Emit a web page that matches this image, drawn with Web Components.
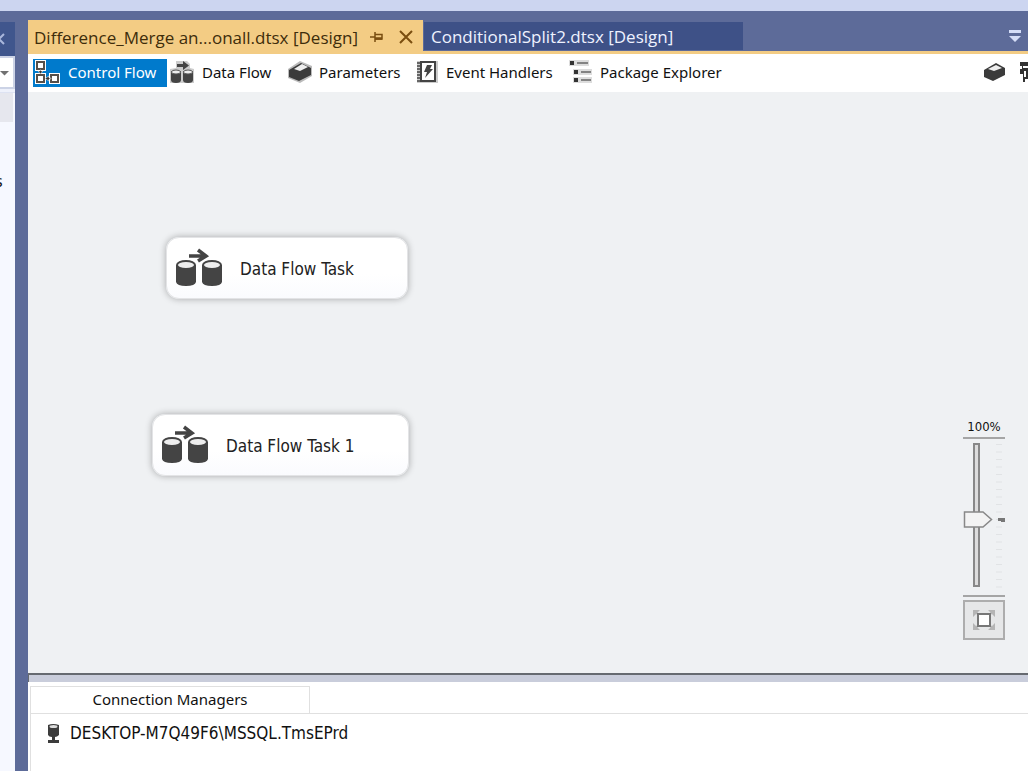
<!DOCTYPE html>
<html lang="en">
<head>
<meta charset="utf-8">
<title>Package designer</title>
<style>
html, body { margin: 0; height: 100%; overflow: hidden; }
body { font-family: "Noto Sans", "Open Sans", sans-serif; background: #5d6b99; color: #111; }
</style>
</head>
<body>
<ide-shell>
  <side-panel slot="side"></side-panel>
  <document-tabs slot="main"></document-tabs>
  <designer-toolbar slot="main"></designer-toolbar>
  <design-canvas slot="main">
    <task-node style="--x:138px;--y:145px;--w:242px">Data Flow Task</task-node>
    <task-node style="--x:124px;--y:322px;--w:257px">Data Flow Task 1</task-node>
    <zoom-control slot="zoom"></zoom-control>
  </design-canvas>
  <connection-managers slot="main"></connection-managers>
</ide-shell>
<script>
const BASE = '<style>:host,*{box-sizing:border-box}button{font:inherit;color:inherit;background:none;border:0;padding:0;margin:0;text-align:left}svg{display:block;flex:none}</style>';
const define = (name, html) => {
  const t = document.createElement('template');
  t.innerHTML = BASE + html;
  customElements.define(name, class extends HTMLElement {
    constructor() {
      super();
      this.attachShadow({ mode: 'open' }).append(t.content.cloneNode(true));
    }
  });
};

define('ide-shell', `<style>
:host{display:flex;flex-direction:column;height:100vh;background:#5d6b99}
.strip{height:11px;background:#ccd5f0;flex:none}
.work{flex:1;display:flex;gap:13px;min-height:0}
.main{flex:1;min-width:0;display:flex;flex-direction:column;padding-top:9px}
</style><div class="strip"></div><div class="work"><slot name="side"></slot><main class="main"><slot name="main"></slot></main></div>`);

define('side-panel', `<style>
:host{display:flex;flex-direction:column;width:15px;flex:none;margin-top:11px;background:#f6f8ff;overflow:hidden}
.head{height:34px;background:#40568d;display:flex;align-items:center}
.combo{height:33px;background:#fff;border:2px solid #ccd3e6;border-left:0;display:flex;align-items:center}
.rule{height:4px;background:#eef1fb;border-bottom:1px solid #dde2f2}
.sel{height:29px;width:13px;background:#e6e7ee}
.item{margin:47px 0 0 -5px;font-size:16px;line-height:24px}
</style>
<div class="head"><button aria-label="Close"><svg width="5" height="12" viewBox="0 0 5 12"><path d="M4 1L-1 6L4 11" fill="none" stroke="#a9b7dc" stroke-width="2"/></svg></button></div>
<div class="combo"><button aria-label="Open list"><svg width="10" height="6"><path d="M0 1H9L4.500 5.500Z" fill="#717171"/></svg></button></div>
<div class="rule"></div><div class="sel"></div><div class="item">s</div>`);

define('document-tabs', `<style>
:host{display:flex;height:34px;flex:none;border-bottom:3px solid #f3cc84;font-family:"Open Sans",sans-serif;font-size:17px;line-height:24px}
.tab{display:flex;align-items:center;white-space:nowrap}
.active{width:395px;height:34px;background:#f3cc84;color:#3e2d0b;padding-left:6px;flex:none}
.title{width:336px;padding-top:2px}
.other{width:319px;height:28px;margin:2px 0 0 1px;background:#3e5187;color:#eef2ff;padding:2px 0 0 7px}
.pin{width:28px}
.more{margin:10px 6px 0 auto;align-self:flex-start}
</style>
<div class="tab active"><button class="title">Difference_Merge an...onall.dtsx [Design]</button>
<button class="pin" aria-label="Pin"><svg width="14" height="12" viewBox="0 0 14 12"><path d="M0 6H5M5 1V11M5 3.500H12V8H5" fill="none" stroke="#7a4e10" stroke-width="1.500"/><path d="M5 7.500H12" stroke="#7a4e10" stroke-width="2.500"/></svg></button>
<button aria-label="Close tab"><svg width="16" height="14" viewBox="0 0 16 14"><path d="M2 1L14 13M14 1L2 13" stroke="#7a4e10" stroke-width="2"/></svg></button></div>
<button class="tab other">ConditionalSplit2.dtsx [Design]</button>
<button class="more" aria-label="Open documents"><svg width="14" height="13"><path d="M1 0H13V3H1ZM1 6H13L7 12Z" fill="#d5def8"/></svg></button>`);

define('designer-toolbar', `<style>
:host{display:flex;height:38px;flex:none;background:#fff;align-items:center;padding-left:5px;overflow:hidden;font-size:15px;line-height:22px;color:#111}
button{display:flex;align-items:center;height:28px;flex:none;white-space:nowrap;gap:7px;padding-bottom:2px}
.on{background:#007acc;color:#fff;width:134px;padding-left:2px;gap:8px;margin-right:3px}
.b{width:118px}.c{width:128px}.d{width:153px}
.right{margin-left:auto;gap:13px;width:45px}
</style>
<button class="on"><svg width="25" height="25" viewBox="0 0 25 25"><g fill="#655d55" stroke="#fff" stroke-width="4"><rect x="2" y="2" width="7" height="7"/><rect x="2" y="15" width="7" height="7"/><rect x="16" y="15" width="7" height="7"/></g><g fill="#fff" stroke="#564f49" stroke-width="2"><rect x="2" y="2" width="7" height="7"/><rect x="2" y="15" width="7" height="7"/><rect x="16" y="15" width="7" height="7"/></g><path d="M5 10H6V11H8L5.500 14L3 11H5ZM16 18H14V16L10 18.500L14 21V19H16Z" fill="#333" stroke="#fff" stroke-width=".5"/></svg>Control Flow</button>
<button class="b"><svg width="25" height="25" viewBox="0 0 25 25"><path d="M6 1H17L20 4V8L24 9V23H0V9L6 8Z" fill="#ccc"/><g fill="#444"><path d="M1 11V20Q1 23 6 23T11 20V11ZM13 11V20Q13 23 18 23T23 20V11Z"/><path d="M7 4H13V1L19 5.500L13 10V7H7Z"/></g><g fill="#eee" stroke="#555"><ellipse cx="6" cy="12" rx="4.500" ry="2"/><ellipse cx="18" cy="12" rx="4.500" ry="2"/></g></svg>Data Flow</button>
<button class="c"><svg width="24" height="24" viewBox="0 0 24 24"><path d="M0 9L12 1L24 6V16L12 23L0 18Z" fill="#bbb"/><path d="M1 10L13 3L23 8V15L11 21L1 17Z" fill="#3b3b3b"/><path d="M6 9L14 4L20 7L12 11Z" fill="#eee"/></svg>Parameters</button>
<button class="d"><svg width="23" height="24" viewBox="0 0 23 24"><path d="M1 1H22V23H1Z" fill="#ccc"/><path d="M5 2H19V21H5Z" fill="#fff" stroke="#444" stroke-width="2"/><path d="M1 3H5M1 6H5M1 9H5M1 12H5M1 15H5M1 18H5M1 21H5" stroke="#444" stroke-width="1.500"/><path d="M11 5H16L14 9H17L9 18L11 12H8Z" fill="#444"/></svg>Event Handlers</button>
<button><svg width="24" height="24" viewBox="0 0 24 24"><path d="M0 0H20V6H0ZM4 9H23V15H4ZM4 17H23V23H4Z" fill="#ddd"/><path d="M1 1H5V5H1ZM5 10H9V14H5ZM5 18H9V22H5Z" fill="#333"/><path d="M8 3H19M12 12H22M12 20H22" stroke="#666" stroke-width="1.500"/></svg>Package Explorer</button>
<button class="right" aria-label="Parameters and toolbox"><svg width="23" height="20" viewBox="0 0 23 20"><path d="M1 8L13 1L22 6V13L10 19L1 15Z" fill="#3b3b3b"/><path d="M5 7L13 3L19 6L11 9Z" fill="#eee"/></svg><svg width="9" height="22"><path d="M1 1H9V18H6V21H4V13H1V8H3V5H1Z" fill="#333"/><path d="M4 5H9V7H4ZM5 10H7V16H5Z" fill="#fff"/></svg></button>`);

define('design-canvas', `<style>
:host{display:block;position:relative;flex:1;min-height:0;background:#eff1f3;overflow:hidden}
.zoom{position:absolute;right:23px;bottom:33px}
</style><slot></slot><div class="zoom"><slot name="zoom"></slot></div>`);

define('task-node', `<style>
:host{position:absolute;left:var(--x);top:var(--y);width:var(--w);height:62px;display:flex;align-items:center;gap:16px;padding-left:8px;border-radius:13px;background:linear-gradient(#fff 60%,#fafbfe);border:1px solid #e3e4e6;box-shadow:0 0 7px #0000004d;font-family:"DejaVu Sans Condensed","DejaVu Sans",sans-serif;font-size:17px;line-height:24px;color:#222}
span{padding-top:2px}
</style><svg width="49" height="40" viewBox="0 0 49 40"><g fill="#444"><path d="M1 17V34Q2 38 11 38T21 34V17ZM27 17V34Q28 38 37 38T47 34V17Z"/></g><g fill="#eee" stroke="#444" stroke-width="2"><ellipse cx="11" cy="17" rx="9" ry="4"/><ellipse cx="37" cy="17" rx="9" ry="4"/></g><path d="M14 8H31M23 2L31 8L23 13" fill="none" stroke="#444" stroke-width="3.500"/></svg><span><slot></slot></span>`);

define('zoom-control', `<style>
:host{display:flex;flex-direction:column;align-items:stretch;width:42px;font-family:"DejaVu Sans Condensed","DejaVu Sans",sans-serif;font-size:13px;line-height:20px}
label{text-align:center;height:20px;color:#111}
.rail{display:flex;justify-content:space-between;border:solid #a5a5a5;border-width:2px 0;height:160px;padding:4px 0 8px}
input{appearance:none;-webkit-appearance:none;writing-mode:vertical-lr;direction:rtl;width:30px;height:144px;margin:0;background:linear-gradient(#888,#888) 10px 0/7px 2px no-repeat,linear-gradient(#888,#888) 10px 100%/7px 2px no-repeat,linear-gradient(90deg,#888 2px,#ddd 2px 5px,#888 5px) 10px 0/7px 100% no-repeat}
input::-webkit-slider-runnable-track{width:30px;height:144px}
input::-webkit-slider-thumb{-webkit-appearance:none;width:30px;height:17px;background:url("data:image/svg+xml,%3Csvg xmlns='http://www.w3.org/2000/svg' width='30' height='17'%3E%3Cpath d='M1.500 1H20L28.500 8.500L20 16H1.500Z' fill='%23f3f3f3' stroke='%23888' stroke-width='1.500'/%3E%3C/svg%3E") no-repeat}
.fit{height:40px;margin-top:3px;border:2px solid #adadad;background:#e6e7e8;display:flex;align-items:center;justify-content:center}
</style><label for="z">100%</label>
<div class="rail"><input id="z" type="range" min="0" max="128" value="59"><svg width="10" height="146"><path d="M4 1V146" stroke="#e1e3e5" stroke-width="6" stroke-dasharray="1 6.500"/><path d="M3 75H10V79H6V78H3Z" fill="#777"/></svg></div>
<button class="fit" aria-label="Fit to window"><svg width="24" height="22" viewBox="0 0 24 22"><path d="M1 8V1H8ZM16 1H23V8ZM23 14V21H16ZM8 21H1V14Z" fill="#b5b5b5"/><path d="M2 2L7 6M22 2L17 6M22 20L17 16M2 20L7 16" stroke="#b5b5b5" stroke-width="2"/><rect x="6" y="5" width="12" height="12" fill="#fff" stroke="#777" stroke-width="2"/></svg></button>`);

define('connection-managers', `<style>
:host{display:block;flex:none;height:98px;background:#fff;font-size:15px;line-height:22px}
.split{height:9px;background:#c9cddb;border:solid #666a70;border-width:2px 0 0 1px}
.tabs{display:flex;margin:4px 0 0 2px}
.tab{width:280px;height:27px;text-align:center;border:1px solid #e0e0e0;border-bottom:0;padding-bottom:2px}
.list{margin:0 0 0 2px;border:solid #e0e0e0;border-width:1px 0 0 1px;height:58px;padding:8px 0 0 15px}
.row{display:flex;align-items:center;gap:9px;font-family:"DejaVu Sans Condensed","DejaVu Sans",sans-serif;font-size:17px}
</style><div class="split"></div><div class="tabs"><button class="tab">Connection Managers</button></div>
<div class="list"><button class="row"><svg width="15" height="21" viewBox="0 0 15 21"><path d="M2 2Q7 0 13 2V12Q11 14 9 14V17H13V20H2V17H6V14Q3 14 2 12Z" fill="#3c3c3c"/><ellipse cx="7.500" cy="3.500" rx="4" ry="1.500" fill="#ddd"/></svg>DESKTOP-M7Q49F6\\MSSQL.TmsEPrd</button></div>`);
</script>
</body>
</html>
